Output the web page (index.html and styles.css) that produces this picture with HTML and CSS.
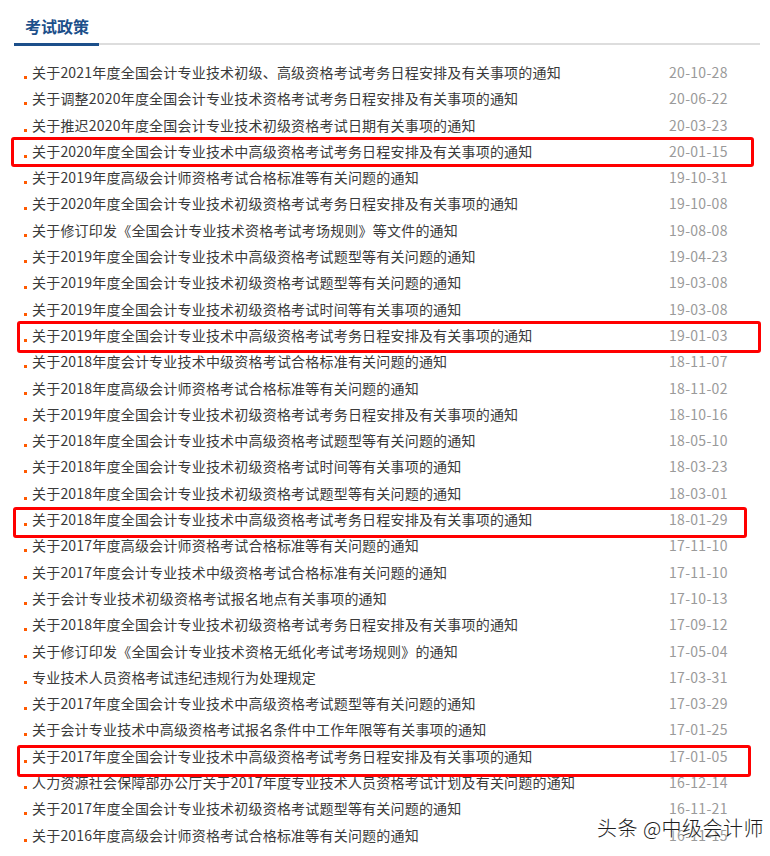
FILE: index.html
```html
<!DOCTYPE html>
<html lang="zh-CN">
<head>
<meta charset="utf-8">
<title>考试政策</title>
<link rel="stylesheet" href="styles.css">
</head>
<body>
<div class="panel">
	<div class="panel-head">
		<h2>考试政策</h2>
	</div>
	<ul class="news">
		<li><a>关于2021年度全国会计专业技术初级、高级资格考试考务日程安排及有关事项的通知</a><span class="date">20-10-28</span></li>
		<li><a>关于调整2020年度全国会计专业技术资格考试考务日程安排及有关事项的通知</a><span class="date">20-06-22</span></li>
		<li><a>关于推迟2020年度全国会计专业技术初级资格考试日期有关事项的通知</a><span class="date">20-03-23</span></li>
		<li><a>关于2020年度全国会计专业技术中高级资格考试考务日程安排及有关事项的通知</a><span class="date">20-01-15</span></li>
		<li><a>关于2019年度高级会计师资格考试合格标准等有关问题的通知</a><span class="date">19-10-31</span></li>
		<li><a>关于2020年度全国会计专业技术初级资格考试考务日程安排及有关事项的通知</a><span class="date">19-10-08</span></li>
		<li><a>关于修订印发《全国会计专业技术资格考试考场规则》等文件的通知</a><span class="date">19-08-08</span></li>
		<li><a>关于2019年度全国会计专业技术中高级资格考试题型等有关问题的通知</a><span class="date">19-04-23</span></li>
		<li><a>关于2019年度全国会计专业技术初级资格考试题型等有关问题的通知</a><span class="date">19-03-08</span></li>
		<li><a>关于2019年度全国会计专业技术初级资格考试时间等有关事项的通知</a><span class="date">19-03-08</span></li>
		<li><a>关于2019年度全国会计专业技术中高级资格考试考务日程安排及有关事项的通知</a><span class="date">19-01-03</span></li>
		<li><a>关于2018年度会计专业技术中级资格考试合格标准有关问题的通知</a><span class="date">18-11-07</span></li>
		<li><a>关于2018年度高级会计师资格考试合格标准等有关问题的通知</a><span class="date">18-11-02</span></li>
		<li><a>关于2019年度全国会计专业技术初级资格考试考务日程安排及有关事项的通知</a><span class="date">18-10-16</span></li>
		<li><a>关于2018年度全国会计专业技术中高级资格考试题型等有关问题的通知</a><span class="date">18-05-10</span></li>
		<li><a>关于2018年度全国会计专业技术初级资格考试时间等有关事项的通知</a><span class="date">18-03-23</span></li>
		<li><a>关于2018年度全国会计专业技术初级资格考试题型等有关问题的通知</a><span class="date">18-03-01</span></li>
		<li><a>关于2018年度全国会计专业技术中高级资格考试考务日程安排及有关事项的通知</a><span class="date">18-01-29</span></li>
		<li><a>关于2017年度高级会计师资格考试合格标准等有关问题的通知</a><span class="date">17-11-10</span></li>
		<li><a>关于2017年度会计专业技术中级资格考试合格标准有关问题的通知</a><span class="date">17-11-10</span></li>
		<li><a>关于会计专业技术初级资格考试报名地点有关事项的通知</a><span class="date">17-10-13</span></li>
		<li><a>关于2018年度全国会计专业技术初级资格考试考务日程安排及有关事项的通知</a><span class="date">17-09-12</span></li>
		<li><a>关于修订印发《全国会计专业技术资格无纸化考试考场规则》的通知</a><span class="date">17-05-04</span></li>
		<li><a>专业技术人员资格考试违纪违规行为处理规定</a><span class="date">17-03-31</span></li>
		<li><a>关于2017年度全国会计专业技术中高级资格考试题型等有关问题的通知</a><span class="date">17-03-29</span></li>
		<li><a>关于会计专业技术中高级资格考试报名条件中工作年限等有关事项的通知</a><span class="date">17-01-25</span></li>
		<li><a>关于2017年度全国会计专业技术中高级资格考试考务日程安排及有关事项的通知</a><span class="date">17-01-05</span></li>
		<li><a>人力资源社会保障部办公厅关于2017年度专业技术人员资格考试计划及有关问题的通知</a><span class="date">16-12-14</span></li>
		<li><a>关于2017年度全国会计专业技术初级资格考试题型等有关问题的通知</a><span class="date">16-11-21</span></li>
		<li><a>关于2016年度高级会计师资格考试合格标准等有关问题的通知</a><span class="date">16-11-15</span></li>
	</ul>

	<!-- red boxes drawn over the screenshot -->
	<div class="mark mark-1"></div>
	<div class="mark mark-2"></div>
	<div class="mark mark-3"></div>
	<div class="mark mark-4"></div>

	<div class="watermark">头条 @中级会计师</div>
</div>
</body>
</html>
```

FILE: styles.css
```css
body {
	margin: 0;
	background: #fff;
	font-family: "Noto Sans CJK SC", "Microsoft YaHei", sans-serif;
}

.panel {
	position: relative;
	width: 770px;
	height: 856px;
	overflow: hidden;
}

.panel-head {
	margin: 0 10px 0 14px;
	height: 43px;
	border-bottom: 2px solid #ddd;
}

.panel-head h2 {
	margin: 0 0 -2px 0;
	display: inline-block;
	height: 43px;
	padding: 0 10px 0 11px;
	font-size: 16px;
	line-height: 53px;
	font-weight: bold;
	color: #1c4f8a;
	border-bottom: 3px solid #1c4f8a;
}

.news {
	list-style: none;
	margin: 0;
	padding: 14px 0 0 0;
}

.news li {
	display: flex;
	height: 26.3px;
	line-height: 26.3px;
	font-size: 14px;
	padding-left: 32px;
	position: relative;
}

.news li::before {
	content: "";
	position: absolute;
	left: 24px;
	top: 17px;
	width: 3px;
	height: 3px;
	background: #ff5a00;
}

.news li a {
	flex: 1;
	color: #3a3a3a;
	white-space: nowrap;
	overflow: hidden;
	letter-spacing: 0.2px;
}

.news .date {
	width: 101px;
	color: #9a9a9a;
	font-size: 14px;
	letter-spacing: 0.3px;
}

.mark {
	position: absolute;
	border: 3px solid #f00;
	border-radius: 3px;
	box-sizing: border-box;
}

.mark-1 { left: 11px; top: 137px; width: 743px; height: 30px; }
.mark-2 { left: 17px; top: 321px; width: 744px; height: 32px; }
.mark-3 { left: 13px; top: 507px; width: 734px; height: 31px; }
.mark-4 { left: 17px; top: 745px; width: 734px; height: 32px; }

.watermark {
	position: absolute;
	left: 597px;
	top: 813px;
	font-size: 20px;
	font-weight: 300;
	color: #1e1e1e;
	letter-spacing: 0.5px;
	text-shadow: 0 0 2px #fff, 0 0 2px #fff;
}
```
